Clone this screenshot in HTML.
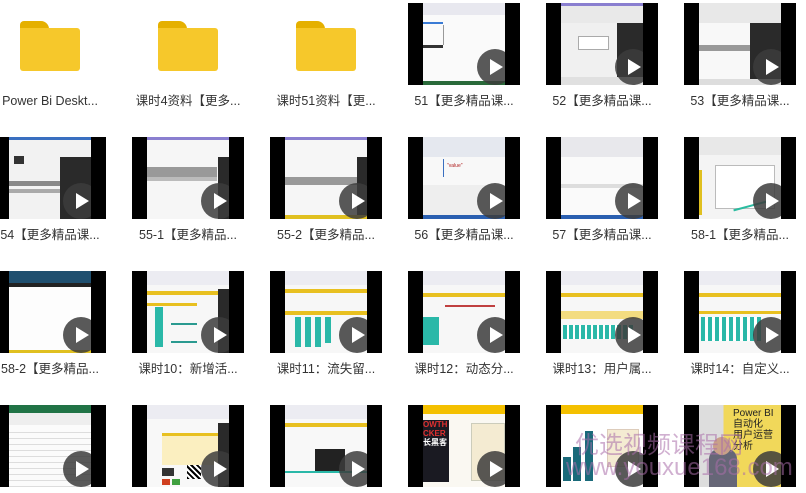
<!DOCTYPE html>
<html><head><meta charset="utf-8">
<style>
*{margin:0;padding:0;box-sizing:border-box}
body{width:806px;height:493px;overflow:hidden;background:#fff;position:relative;font-family:"Liberation Sans","Noto Sans CJK SC",sans-serif}
.folder{position:absolute;width:60px;height:50px}
.folder .tab{position:absolute;left:0;top:0;width:29px;height:12px;background:#e5b000;border-radius:4px 8px 0 0}
.folder .body{position:absolute;left:0;top:7px;width:60px;height:43px;background:#f6c82b;border-radius:0 3px 3px 3px}
.lbl{position:absolute;width:130px;text-align:center;font-size:12.5px;color:#333;white-space:nowrap;line-height:16px}
.th{position:absolute;width:112px;height:82px;background:#000}
.th .c{position:absolute;left:15px;top:0;width:82px;height:82px;background:#f4f4f4;overflow:hidden}
.th .p{position:absolute;width:36px;height:36px;border-radius:50%;background:rgba(60,60,60,.85);right:-8px;bottom:0}
.th .p:after{content:"";position:absolute;left:13px;top:10px;border-left:13px solid #fff;border-top:8px solid transparent;border-bottom:8px solid transparent}
.b{position:absolute}
.wm{position:absolute;color:rgba(170,110,170,.55);white-space:nowrap}
</style></head><body>

<div class="folder" style="left:20px;top:21px"><div class="tab"></div><div class="body"></div></div>
<div class="folder" style="left:158px;top:21px"><div class="tab"></div><div class="body"></div></div>
<div class="folder" style="left:296px;top:21px"><div class="tab"></div><div class="body"></div></div>

<!-- Row1 thumbs -->
<div class="th" style="left:408px;top:3px"><div class="c" style="background:#fafafa">
<div class="b" style="left:0;top:0;width:82px;height:12px;background:#e8e8ef"></div>
<div class="b" style="left:0;top:19px;width:20px;height:2px;background:#3a7bd5"></div>
<div class="b" style="left:20px;top:22px;width:1px;height:20px;background:#999"></div>
<div class="b" style="left:0;top:42px;width:20px;height:3px;background:#333"></div>
<div class="b" style="left:0;top:78px;width:82px;height:4px;background:#2a6a3a"></div>
<div class="p"></div></div></div>
<div class="th" style="left:546px;top:3px"><div class="c" style="background:#f0f0f0">
<div class="b" style="left:0;top:0;width:82px;height:3px;background:#8a7fd0"></div>
<div class="b" style="left:0;top:3px;width:82px;height:17px;background:#e9e9e9"></div>
<div class="b" style="left:56px;top:20px;width:26px;height:58px;background:#2a2a2a"></div>
<div class="b" style="left:17px;top:33px;width:31px;height:14px;border:1px solid #aaa;background:#fff"></div>
<div class="b" style="left:0;top:74px;width:82px;height:8px;background:#e0e0e0"></div>
<div class="p"></div></div></div>
<div class="th" style="left:684px;top:3px"><div class="c" style="background:#f8f8f8">
<div class="b" style="left:0;top:0;width:82px;height:20px;background:#e8e8e8"></div>
<div class="b" style="left:51px;top:20px;width:31px;height:62px;background:#2a2a2a"></div>
<div class="b" style="left:0;top:42px;width:51px;height:6px;background:#999"></div>
<div class="b" style="left:0;top:76px;width:82px;height:6px;background:#ddd"></div>
<div class="p"></div></div></div>

<div class="lbl" style="left:-15px;top:93px">Power Bi Deskt...</div>
<div class="lbl" style="left:123px;top:93px">课时4资料【更多...</div>
<div class="lbl" style="left:261px;top:93px">课时51资料【更...</div>
<div class="lbl" style="left:399px;top:93px">51【更多精品课...</div>
<div class="lbl" style="left:537px;top:93px">52【更多精品课...</div>
<div class="lbl" style="left:675px;top:93px">53【更多精品课...</div>

<!-- Row2 -->
<div class="th" style="left:-6px;top:137px"><div class="c" style="background:#f2f2f2">
<div class="b" style="left:0;top:0;width:82px;height:3px;background:#3a6fc0"></div>
<div class="b" style="left:5px;top:19px;width:10px;height:8px;background:#333"></div>
<div class="b" style="left:51px;top:20px;width:31px;height:62px;background:#2a2a2a"></div>
<div class="b" style="left:0;top:44px;width:51px;height:5px;background:#888"></div>
<div class="b" style="left:0;top:52px;width:51px;height:4px;background:#aaa"></div>
<div class="p"></div></div></div>
<div class="th" style="left:132px;top:137px"><div class="c" style="background:#f6f6f6">
<div class="b" style="left:0;top:0;width:82px;height:3px;background:#8a7fd0"></div>
<div class="b" style="left:71px;top:20px;width:11px;height:62px;background:#2a2a2a"></div>
<div class="b" style="left:0;top:30px;width:70px;height:10px;background:#999"></div>
<div class="b" style="left:0;top:40px;width:70px;height:4px;background:#bbb"></div>
<div class="p"></div></div></div>
<div class="th" style="left:270px;top:137px"><div class="c" style="background:#f6f6f6">
<div class="b" style="left:0;top:0;width:82px;height:3px;background:#8a7fd0"></div>
<div class="b" style="left:72px;top:20px;width:10px;height:62px;background:#2a2a2a"></div>
<div class="b" style="left:0;top:40px;width:72px;height:8px;background:#999"></div>
<div class="b" style="left:0;top:78px;width:82px;height:4px;background:#e0c020"></div>
<div class="p"></div></div></div>
<div class="th" style="left:408px;top:137px"><div class="c" style="background:#f8f8f8">
<div class="b" style="left:0;top:0;width:82px;height:20px;background:#e5e8ef"></div>
<div class="b" style="left:20px;top:22px;width:40px;height:18px;border-left:1px solid #3a6fc0"></div>
<div class="b" style="left:24px;top:26px;width:40px;height:10px;color:#b02020;font-size:5px">"value"</div>
<div class="b" style="left:0;top:48px;width:82px;height:30px;background:#eee"></div>
<div class="b" style="left:0;top:78px;width:82px;height:4px;background:#2a5fb0"></div>
<div class="p"></div></div></div>
<div class="th" style="left:546px;top:137px"><div class="c" style="background:#fafafa">
<div class="b" style="left:0;top:0;width:82px;height:20px;background:#e8e8ec"></div>
<div class="b" style="left:0;top:47px;width:82px;height:4px;background:#ddd"></div>
<div class="b" style="left:0;top:78px;width:82px;height:4px;background:#2a5fb0"></div>
<div class="p"></div></div></div>
<div class="th" style="left:684px;top:137px"><div class="c" style="background:#f4f4f4">
<div class="b" style="left:0;top:0;width:82px;height:18px;background:#e8e8e8"></div>
<div class="b" style="left:16px;top:28px;width:60px;height:44px;background:#fff;border:1px solid #bbb"></div>
<div class="b" style="left:0;top:33px;width:3px;height:45px;background:#e0c020"></div>
<div class="b" style="left:34px;top:68px;width:34px;height:2px;background:#2abca0;transform:rotate(-15deg)"></div>
<div class="p"></div></div></div>

<div class="lbl" style="left:-15px;top:227px">54【更多精品课...</div>
<div class="lbl" style="left:123px;top:227px">55-1【更多精品...</div>
<div class="lbl" style="left:261px;top:227px">55-2【更多精品...</div>
<div class="lbl" style="left:399px;top:227px">56【更多精品课...</div>
<div class="lbl" style="left:537px;top:227px">57【更多精品课...</div>
<div class="lbl" style="left:675px;top:227px">58-1【更多精品...</div>

<!-- Row3 -->
<div class="th" style="left:-6px;top:271px"><div class="c" style="background:#fdfdfd">
<div class="b" style="left:0;top:0;width:82px;height:12px;background:#1f4f6f"></div>
<div class="b" style="left:0;top:12px;width:82px;height:4px;background:#222"></div>
<div class="b" style="left:0;top:79px;width:82px;height:3px;background:#e0c020"></div>
<div class="p"></div></div></div>
<div class="th" style="left:132px;top:271px"><div class="c" style="background:#f7f7f7">
<div class="b" style="left:0;top:0;width:82px;height:14px;background:#ececf2"></div>
<div class="b" style="left:0;top:20px;width:82px;height:4px;background:#e8c020"></div>
<div class="b" style="left:0;top:32px;width:50px;height:3px;background:#e8c020"></div>
<div class="b" style="left:8px;top:36px;width:8px;height:40px;background:#2ab8a8"></div>
<div class="b" style="left:24px;top:44px;width:26px;height:10px;border-bottom:2px solid #2a9a90"></div>
<div class="b" style="left:24px;top:64px;width:26px;height:8px;border-bottom:2px solid #2a9a90"></div>
<div class="b" style="left:71px;top:18px;width:11px;height:64px;background:#2a2a2a"></div>
<div class="p"></div></div></div>
<div class="th" style="left:270px;top:271px"><div class="c" style="background:#f7f7f7">
<div class="b" style="left:0;top:0;width:82px;height:14px;background:#ececf2"></div>
<div class="b" style="left:0;top:18px;width:82px;height:4px;background:#e8c020"></div>
<div class="b" style="left:0;top:40px;width:82px;height:4px;background:#e8c020"></div>
<div class="b" style="left:10px;top:46px;width:6px;height:30px;background:#2ab8a8"></div>
<div class="b" style="left:20px;top:46px;width:6px;height:30px;background:#2ab8a8"></div>
<div class="b" style="left:30px;top:46px;width:6px;height:30px;background:#2ab8a8"></div>
<div class="b" style="left:40px;top:46px;width:6px;height:26px;background:#2ab8a8"></div>
<div class="p"></div></div></div>
<div class="th" style="left:408px;top:271px"><div class="c" style="background:#f7f7f7">
<div class="b" style="left:0;top:0;width:82px;height:14px;background:#ececf2"></div>
<div class="b" style="left:0;top:22px;width:82px;height:4px;background:#e8c020"></div>
<div class="b" style="left:0;top:46px;width:16px;height:28px;background:#2ab8a8"></div>
<div class="b" style="left:22px;top:34px;width:50px;height:4px;border-top:2px solid #c04040"></div>
<div class="p"></div></div></div>
<div class="th" style="left:546px;top:271px"><div class="c" style="background:#f7f7f7">
<div class="b" style="left:0;top:0;width:82px;height:14px;background:#ececf2"></div>
<div class="b" style="left:0;top:22px;width:82px;height:4px;background:#e8c020"></div>
<div class="b" style="left:0;top:40px;width:82px;height:8px;background:#f3dc80"></div>
<div class="b" style="left:2px;top:54px;width:72px;height:14px;background:repeating-linear-gradient(90deg,#2ab8a8 0 4px,#fff 4px 6px)"></div>
<div class="p"></div></div></div>
<div class="th" style="left:684px;top:271px"><div class="c" style="background:#f7f7f7">
<div class="b" style="left:0;top:0;width:82px;height:14px;background:#ececf2"></div>
<div class="b" style="left:0;top:22px;width:82px;height:4px;background:#e8c020"></div>
<div class="b" style="left:0;top:40px;width:82px;height:3px;background:#e8c020"></div>
<div class="b" style="left:2px;top:46px;width:60px;height:24px;background:repeating-linear-gradient(90deg,#2ab8a8 0 4px,#fff 4px 7px)"></div>
<div class="p"></div></div></div>

<div class="lbl" style="left:-15px;top:361px">58-2【更多精品...</div>
<div class="lbl" style="left:123px;top:361px">课时10：新增活...</div>
<div class="lbl" style="left:261px;top:361px">课时11：流失留...</div>
<div class="lbl" style="left:399px;top:361px">课时12：动态分...</div>
<div class="lbl" style="left:537px;top:361px">课时13：用户属...</div>
<div class="lbl" style="left:675px;top:361px">课时14：自定义...</div>

<!-- Row4 -->
<div class="th" style="left:-6px;top:405px"><div class="c" style="background:#fbfbfb">
<div class="b" style="left:0;top:0;width:82px;height:8px;background:#217346"></div>
<div class="b" style="left:0;top:8px;width:82px;height:12px;background:#eee"></div>
<div class="b" style="left:0;top:22px;width:82px;height:60px;background:repeating-linear-gradient(0deg,#ddd 0 1px,transparent 1px 6px)"></div>
<div class="p"></div></div></div>
<div class="th" style="left:132px;top:405px"><div class="c" style="background:#f8f8f8">
<div class="b" style="left:0;top:0;width:82px;height:14px;background:#ececf2"></div>
<div class="b" style="left:15px;top:28px;width:60px;height:32px;background:#fbefc0;border-top:3px solid #e8c020"></div>
<div class="b" style="left:15px;top:63px;width:12px;height:8px;background:#333"></div>
<div class="b" style="left:40px;top:60px;width:14px;height:14px;background:repeating-linear-gradient(45deg,#000 0 2px,#fff 2px 4px)"></div>
<div class="b" style="left:15px;top:74px;width:8px;height:6px;background:#d04020"></div>
<div class="b" style="left:25px;top:74px;width:8px;height:6px;background:#40a040"></div>
<div class="b" style="left:71px;top:18px;width:11px;height:64px;background:#2a2a2a"></div>
<div class="p"></div></div></div>
<div class="th" style="left:270px;top:405px"><div class="c" style="background:#f8f8f8">
<div class="b" style="left:0;top:0;width:82px;height:14px;background:#ececf2"></div>
<div class="b" style="left:0;top:18px;width:82px;height:4px;background:#e8c020"></div>
<div class="b" style="left:30px;top:44px;width:30px;height:22px;background:#222"></div>
<div class="b" style="left:0;top:60px;width:82px;height:8px;border-bottom:2px solid #2ab8a8"></div>
<div class="p"></div></div></div>
<div class="th" style="left:408px;top:405px"><div class="c" style="background:#faf8f2">
<div class="b" style="left:0;top:0;width:82px;height:9px;background:#f4c000"></div>
<div class="b" style="left:0;top:15px;width:26px;height:62px;background:#1a1a22;color:#e03030;font-size:8px;font-weight:bold;line-height:9px">OWTH<br>CKER<br><span style="color:#fff">长黑客</span></div>
<div class="b" style="left:48px;top:18px;width:34px;height:58px;background:#f4ebd2;border:1px solid #ccb"></div>
<div class="p"></div></div></div>
<div class="th" style="left:546px;top:405px"><div class="c" style="background:#fff">
<div class="b" style="left:0;top:0;width:82px;height:9px;background:#f4c000"></div>
<div class="b" style="left:2px;top:52px;width:8px;height:24px;background:#1a6a7a"></div>
<div class="b" style="left:12px;top:42px;width:8px;height:34px;background:#1a6a7a"></div>
<div class="b" style="left:24px;top:26px;width:8px;height:50px;background:#1a6a7a"></div>
<div class="b" style="left:46px;top:24px;width:32px;height:38px;background:#f4ebd2;border:1px solid #dcb"></div>
<div class="p"></div></div></div>
<div class="th" style="left:684px;top:405px"><div class="c" style="background:#eee8c0">
<div class="b" style="left:0;top:0;width:82px;height:82px;background:linear-gradient(90deg,#ddd 0 30%,#f1d85a 30%)"></div>
<div class="b" style="left:34px;top:3px;color:#222;font-size:10px;line-height:11px">Power BI<br>自动化<br>用户运营分析</div>
<div class="b" style="left:10px;top:44px;width:28px;height:38px;background:#667;border-radius:10px 10px 0 0"></div>
<div class="b" style="left:14px;top:32px;width:18px;height:18px;background:#c9a088;border-radius:50%"></div>
<div class="p"></div></div></div>

<div class="wm" style="left:575px;top:425px;font-size:24px;font-family:'Noto Sans CJK SC',sans-serif">优选视频课程网</div>
<div class="wm" style="left:566px;top:454px;font-size:24px;font-family:'Liberation Sans',sans-serif">www.youxue168.com</div>

</body></html>
